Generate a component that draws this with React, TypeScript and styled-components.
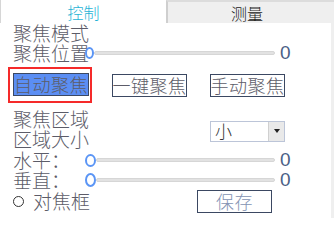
import React from "react";
import styled, { createGlobalStyle } from "styled-components";

const Global = createGlobalStyle`
  html, body { margin: 0; padding: 0; background: #ffffff; }
  body { width: 334px; height: 218px; overflow: hidden; }
`;

const Frame = styled.div`
  width: 334px;
  height: 218px;
  display: flex;
  flex-direction: column;
  font-family: "Noto Sans CJK SC", "Noto Sans", sans-serif;
  font-weight: 300;
  color: #5c5c68;
  font-size: 19px;
  line-height: 20px;
`;

const TabBar = styled.div`
  display: flex;
  height: 23px;
  flex: none;
`;

const Tab = styled.div<{ $active?: boolean }>`
  box-sizing: border-box;
  display: flex;
  align-items: center;
  justify-content: center;
  font-size: 16px;
  line-height: 16px;
  ${(p) =>
    p.$active
      ? `width: 166px; background: #fff; color: #1fb3d6; border-left: 1px solid #d6d6d6;`
      : `flex: 1; background: #efefef; color: #1a1a1a; border-top: 2px solid #dcdcdc; border-left: 2px solid #cfcfcf; padding-right: 8px;`}
`;

const Body = styled.div`
  flex: 1;
  display: flex;
`;

const Main = styled.div`
  flex: 1;
  display: flex;
  flex-direction: column;
  padding-left: 13px;
`;

const Strip = styled.div`
  width: 3px;
  background: #efefef;
`;

const Row = styled.div<{ $h?: number; $mt?: number }>`
  display: flex;
  align-items: center;
  height: ${(p) => p.$h ?? 20}px;
  margin-top: ${(p) => p.$mt ?? 0}px;
`;

const Label = styled.span<{ $w?: number }>`
  width: ${(p) => p.$w ?? 72}px;
  flex: none;
  white-space: nowrap;
`;

const Slider = styled.div`
  width: 190px;
  display: flex;
  align-items: center;
  flex: none;
`;

const Thumb = styled.span<{ $w: number; $h: number }>`
  box-sizing: border-box;
  width: ${(p) => p.$w}px;
  height: ${(p) => p.$h}px;
  border: 2px solid #5b95f5;
  border-radius: 50%;
  background: #fff;
  flex: none;
`;

const Track = styled.span`
  flex: 1;
  height: 4px;
  box-sizing: border-box;
  background: #e2e2e2;
  border: 1px solid #d6d6d6;
  border-radius: 2px;
`;

const Value = styled.span`
  margin-left: 5px;
  font-family: "Liberation Sans", Arial, sans-serif;
  font-size: 19px;
  color: #4b5f86;
`;

const ButtonRow = styled.div`
  display: flex;
  align-items: center;
  height: 36px;
  margin-top: 4px;
  margin-left: -5px;
`;

const Highlight = styled.div`
  box-sizing: border-box;
  width: 84px;
  height: 36px;
  border: 2px solid #f52a2a;
  padding: 4px 0 0 3px;
`;

const Btn = styled.div<{ $active?: boolean; $ml?: number; $light?: boolean }>`
  box-sizing: border-box;
  width: ${(p) => (p.$active ? 76 : 75)}px;
  height: 23px;
  border: 1px solid #3b4862;
  background: ${(p) => (p.$active ? "#5b8ef4" : "#fff")};
  color: ${(p) => (p.$light ? "#8393b3" : "#5c5c68")};
  margin-left: ${(p) => p.$ml ?? 0}px;
  display: flex;
  align-items: center;
  justify-content: center;
  white-space: nowrap;
  font-size: 18px;
  line-height: 21px;
  letter-spacing: 0.5px;
  flex: none;
`;

const Spacer = styled.span<{ $w: number }>`
  width: ${(p) => p.$w}px;
  flex: none;
`;

const Select = styled.div`
  box-sizing: border-box;
  width: 75px;
  height: 21px;
  border: 1px solid #bcc5d8;
  display: flex;
  align-items: center;
  margin-top: -16px;
  flex: none;
`;

const SelectText = styled.span`
  flex: 1;
  padding-left: 4px;
  font-size: 17px;
  color: #333;
`;

const Arrow = styled.span`
  box-sizing: border-box;
  width: 16px;
  height: 19px;
  background: #e9e9e9;
  border-left: 1px solid #d0d0d0;
  display: flex;
  align-items: center;
  justify-content: center;
  &::after {
    content: "";
    border-left: 3.5px solid transparent;
    border-right: 3.5px solid transparent;
    border-top: 4px solid #222;
  }
`;

const Radio = styled.span`
  box-sizing: border-box;
  width: 11px;
  height: 11px;
  border: 1.5px solid #333;
  border-radius: 50%;
  margin-right: 9px;
  flex: none;
`;

function SliderRow({ label, tw, th, mt }: { label: string; tw: number; th: number; mt?: number }) {
  return (
    <Row $mt={mt}>
      <Label>{label}</Label>
      <Slider>
        <Thumb $w={tw} $h={th} />
        <Track />
      </Slider>
      <Value>0</Value>
    </Row>
  );
}

export default function App() {
  return (
    <>
      <Global />
      <Frame>
        <TabBar>
          <Tab $active>控制</Tab>
          <Tab>测量</Tab>
        </TabBar>
        <Body>
          <Main>
            <Row>
              <Label>聚焦模式</Label>
            </Row>
            <SliderRow label="聚焦位置" tw={9} th={12} />
            <ButtonRow>
              <Highlight>
                <Btn $active>自动聚焦</Btn>
              </Highlight>
              <Btn $ml={20}>一键聚焦</Btn>
              <Btn $ml={23}>手动聚焦</Btn>
            </ButtonRow>
            <Row $mt={6}>
              <Label>聚焦区域</Label>
            </Row>
            <Row>
              <Label>区域大小</Label>
              <Spacer $w={125} />
              <Select>
                <SelectText>小</SelectText>
                <Arrow />
              </Select>
            </Row>
            <SliderRow label="水平：" tw={11} th={13} mt={1} />
            <SliderRow label="垂直：" tw={11} th={14} />
            <Row $h={22}>
              <Radio />
              <Label $w={164}>对焦框</Label>
              <Btn $light>保存</Btn>
            </Row>
          </Main>
          <Strip />
        </Body>
      </Frame>
    </>
  );
}
